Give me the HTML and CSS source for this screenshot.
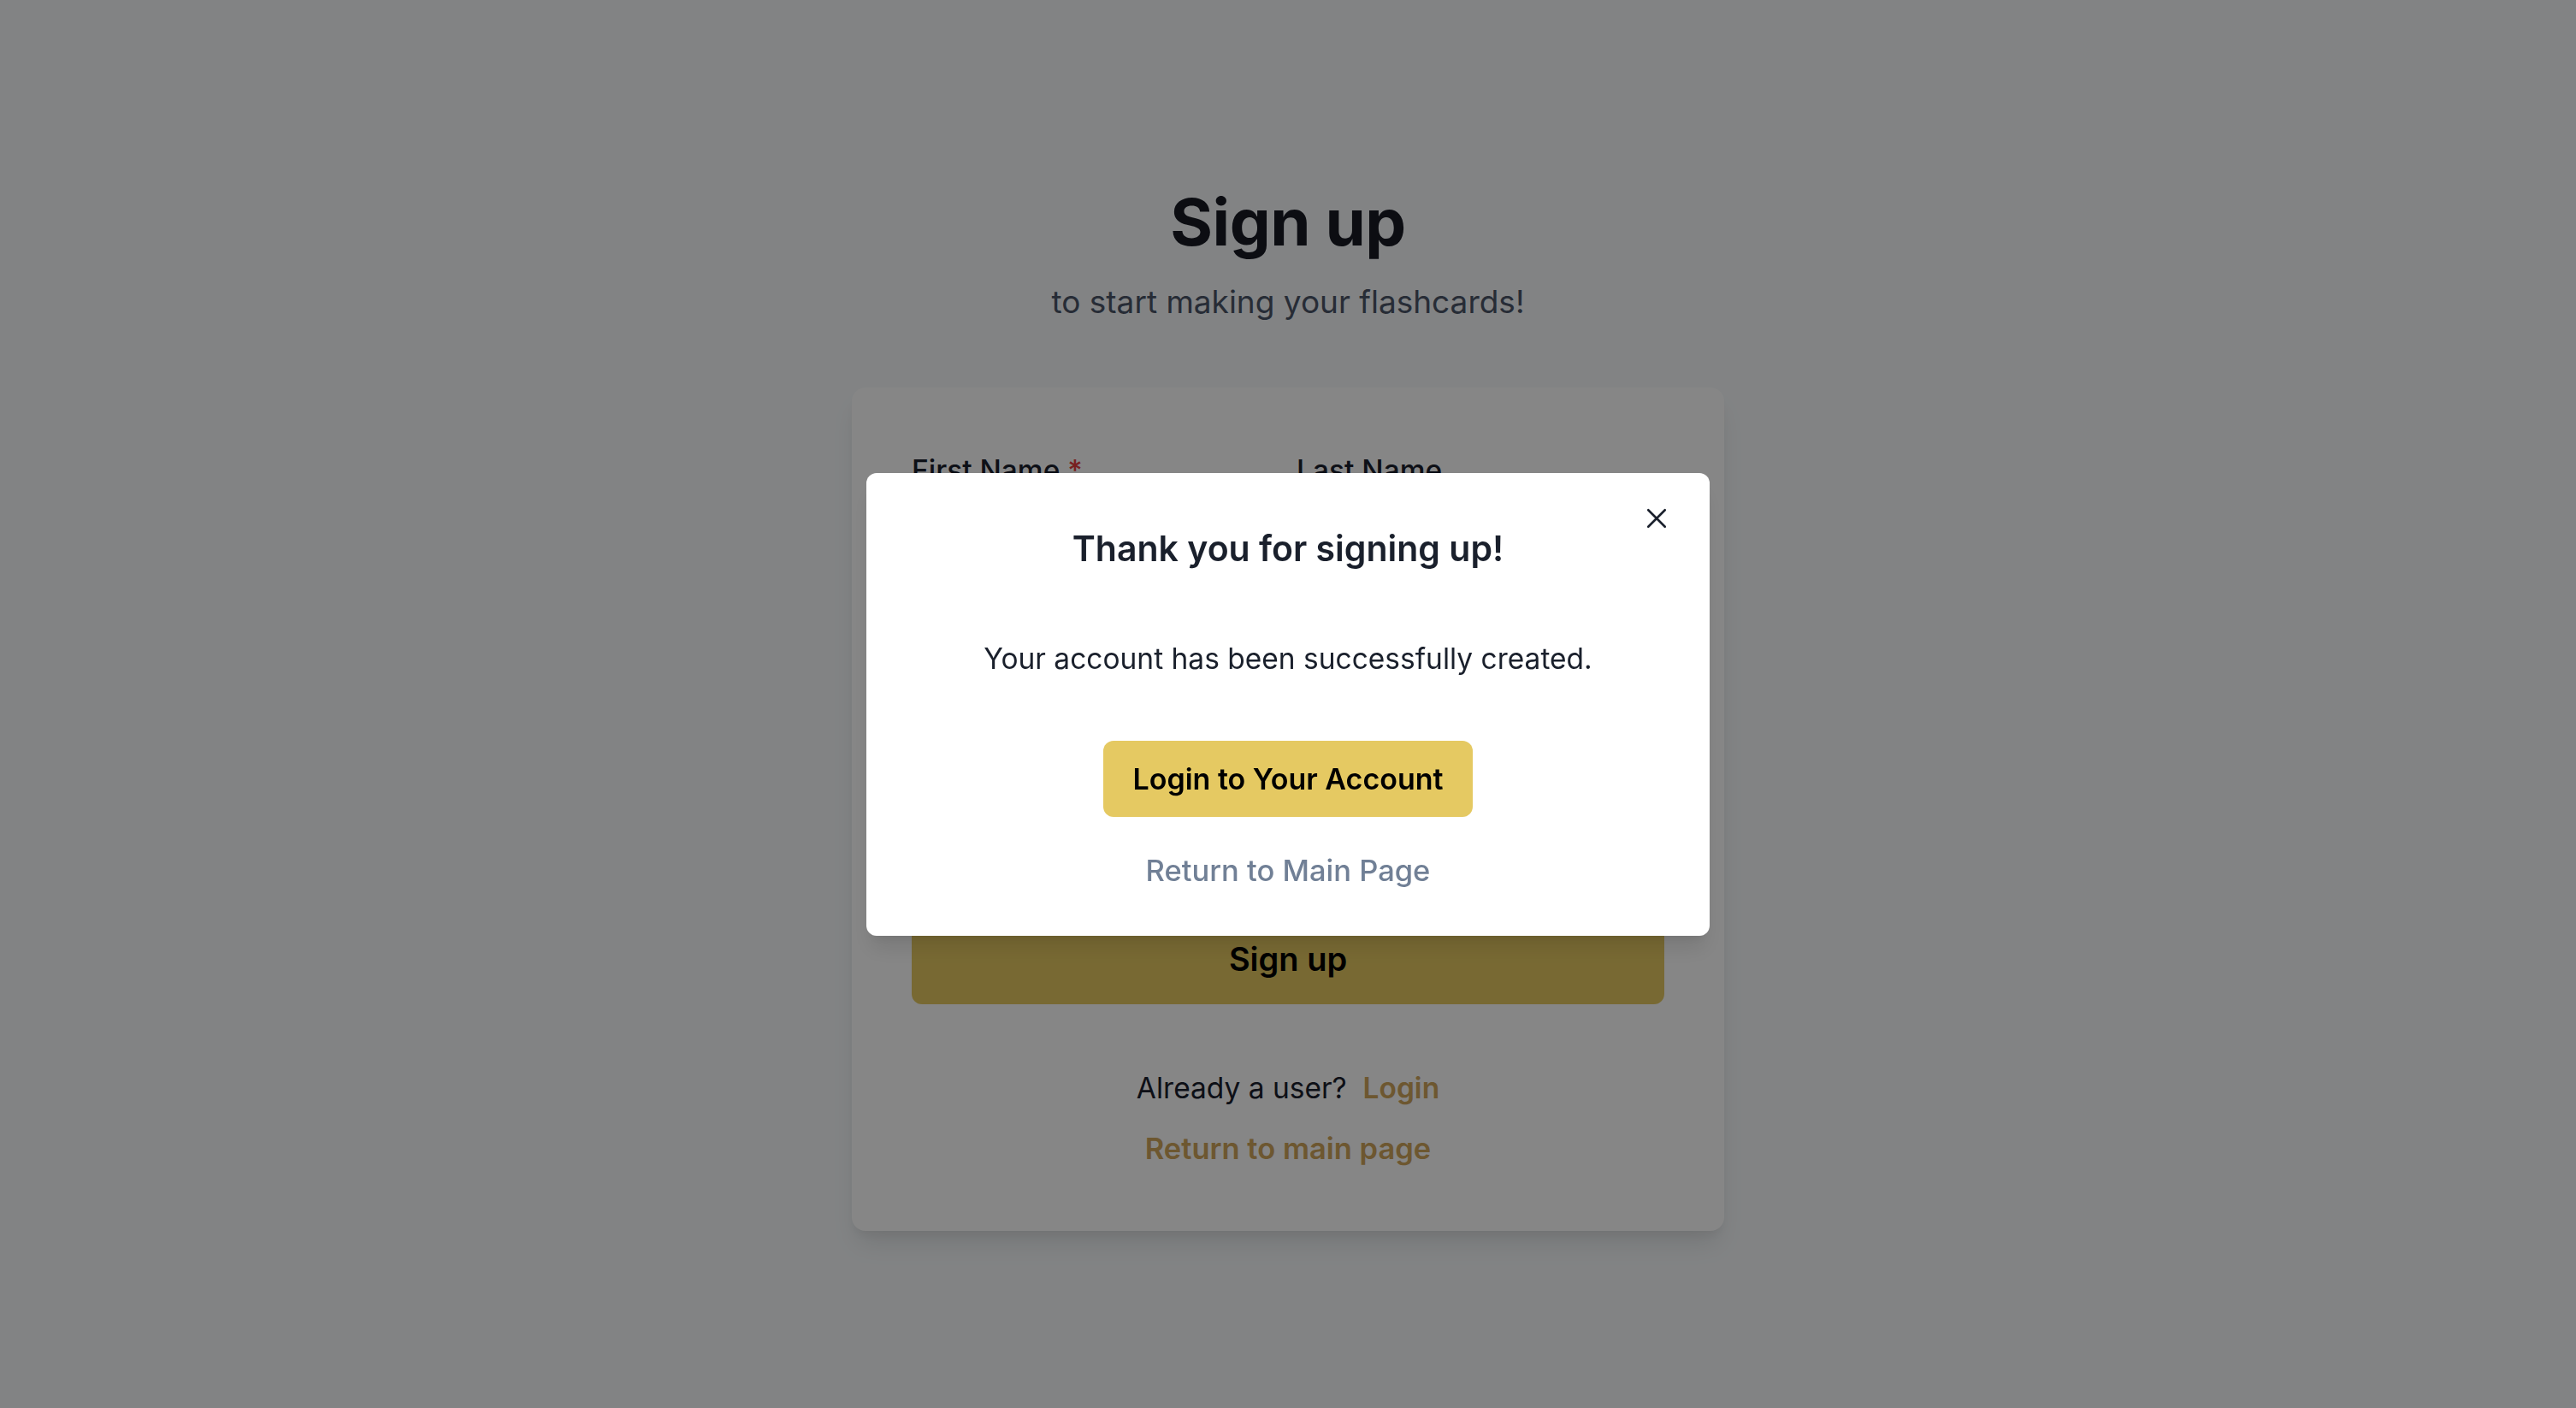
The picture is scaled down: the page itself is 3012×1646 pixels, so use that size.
FILE: index.html
```html
<!DOCTYPE html>
<html lang="en">
<head>
<meta charset="utf-8">
<title>Sign up</title>
<link rel="stylesheet" href="styles.css">
</head>
<body>
<main class="page">
  <h1 class="title">Sign up</h1>
  <p class="subtitle">to start making your flashcards!</p>
  <section class="card">
    <form class="form">
      <div class="name-row">
        <div class="field">
          <label class="label">First Name <span class="req">*</span></label>
          <input class="input" type="text">
        </div>
        <div class="field">
          <label class="label">Last Name</label>
          <input class="input" type="text">
        </div>
      </div>
      <div class="field">
        <label class="label">Email address <span class="req">*</span></label>
        <input class="input" type="email">
      </div>
      <div class="field">
        <label class="label">Password <span class="req">*</span></label>
        <input class="input" type="password">
      </div>
      <button class="btn-primary submit" type="button">Sign up</button>
    </form>
    <p class="already">Already a user?&nbsp; <a class="link" href="#">Login</a></p>
    <p class="back"><a class="link" href="#">Return to main page</a></p>
  </section>
</main>

<div class="overlay">
  <div class="modal" role="dialog">
    <button class="close" type="button" aria-label="Close">
      <svg viewBox="0 0 24 24" width="26" height="26"><path d="M3 3 L21 21 M21 3 L3 21" stroke="#1A202C" stroke-width="2.4" stroke-linecap="round" fill="none"/></svg>
    </button>
    <h2 class="modal-title">Thank you for signing up!</h2>
    <p class="modal-text">Your account has been successfully created.</p>
    <button class="btn-primary modal-btn" type="button">Login to Your Account</button>
    <a class="modal-link" href="#">Return to Main Page</a>
  </div>
</div>
</body>
</html>
```

FILE: styles.css
```css
* { box-sizing: border-box; }

html, body {
  margin: 0;
  height: 100%;
}

body {
  background: #F7FAFC;
  font-family: Inter, "Noto Sans", "Liberation Sans", sans-serif;
  color: #1A202C;
  overflow: hidden;
}

.page {
  display: flex;
  flex-direction: column;
  align-items: center;
  padding-top: 214px;
}

.title {
  margin: 0;
  font-size: 76px;
  line-height: 90px;
  font-weight: 700;
  color: #171923;
  letter-spacing: -0.5px;
}

.subtitle {
  margin: 22px 0 0;
  font-size: 37px;
  line-height: 54px;
  color: #4A5568;
}

.card {
  margin-top: 73px;
  width: 1020px;
  height: 986px;
  background: #fff;
  border-radius: 16px;
  box-shadow: 0 20px 30px -6px rgba(0,0,0,0.1), 0 8px 12px -4px rgba(0,0,0,0.05);
  padding: 73px 70px 70px;
  display: flex;
  flex-direction: column;
  align-items: stretch;
}

.form {
  display: flex;
  flex-direction: column;
  gap: 40px;
}

.name-row {
  display: grid;
  grid-template-columns: minmax(0, 1fr) minmax(0, 1fr);
  column-gap: 20px;
}

.field {
  display: flex;
  flex-direction: column;
  min-width: 0;
}

.label {
  font-size: 33.5px;
  line-height: 48px;
  font-weight: 500;
  margin-bottom: 16px;
}

.req { color: #E53E3E; }

.input {
  width: 100%;
  min-width: 0;
  height: 80px;
  border: 2px solid #E2E8F0;
  border-radius: 12px;
  font-size: 32px;
  padding: 0 32px;
  background: #fff;
}

.btn-primary {
  border: 0;
  background: #E5C962;
  color: #000;
  font-family: inherit;
  font-weight: 600;
  cursor: pointer;
}

.submit {
  margin-top: 0;
  height: 96px;
  border-radius: 12px;
  font-size: 38px;
  padding-bottom: 12px;
}

.already {
  margin: 74px 0 0;
  text-align: center;
  font-size: 33.5px;
  line-height: 48px;
}

.back {
  margin: 23px 0 0;
  text-align: center;
  font-size: 34.5px;
  line-height: 48px;
}

.link {
  color: #D0A55C;
  font-weight: 600;
  text-decoration: none;
}

.overlay {
  position: fixed;
  inset: 0;
  background: rgba(0,0,0,0.475);
  display: flex;
  align-items: center;
  justify-content: center;
}

.modal {
  position: relative;
  width: 986px;
  height: 541px;
  background: #fff;
  border-radius: 12px;
  box-shadow: 0 20px 25px -5px rgba(0,0,0,0.1), 0 10px 10px -5px rgba(0,0,0,0.04);
  display: flex;
  flex-direction: column;
  align-items: center;
  padding: 58px 48px 0;
}

.close {
  position: absolute;
  top: 21px;
  right: 30px;
  width: 64px;
  height: 64px;
  border: 0;
  background: transparent;
  display: flex;
  align-items: center;
  justify-content: center;
  padding: 0;
  cursor: pointer;
}

.modal-title {
  margin: 0;
  font-size: 41px;
  line-height: 60px;
  font-weight: 600;
  color: #1A202C;
}

.modal-text {
  margin: 75px 0 0;
  font-size: 33.5px;
  line-height: 48px;
  color: #1A202C;
}

.modal-btn {
  margin-top: 72px;
  height: 89px;
  padding: 0 34px;
  border-radius: 12px;
  font-size: 34px;
}

.modal-link {
  margin-top: 39px;
  font-size: 34.5px;
  line-height: 48px;
  font-weight: 500;
  color: #718096;
  text-decoration: none;
}
```
